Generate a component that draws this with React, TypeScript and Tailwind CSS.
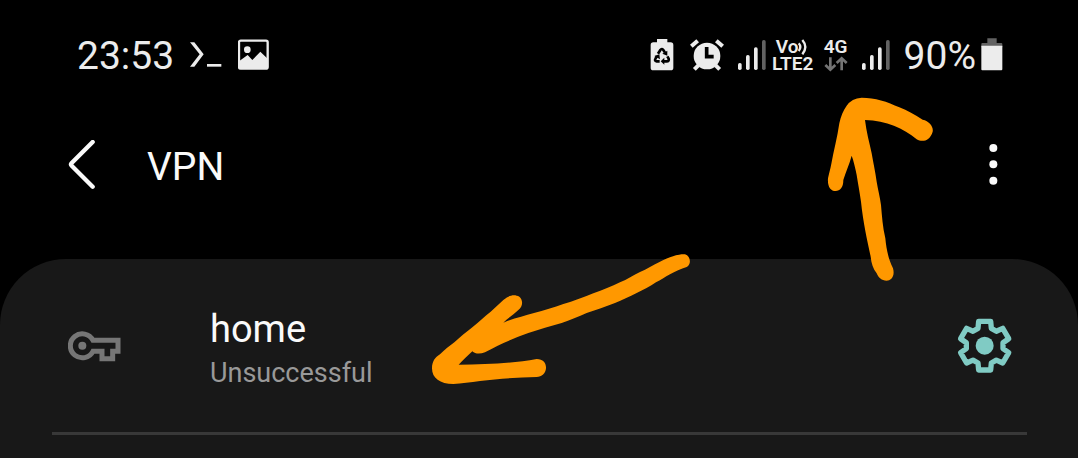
import React from "react";

function PromptIcon() {
  return (
    <svg className="h-8 w-8 shrink-0" viewBox="0 0 96 96" fill="#ececec" aria-hidden="true">
      <path d="M0 10H13L41 46L13 83H0L29 46Z" />
      <rect x="51" y="75" width="43" height="8" />
    </svg>
  );
}

function ImageIcon() {
  return (
    <svg className="h-8 w-8 shrink-0" viewBox="0 0 96 96" aria-hidden="true">
      <rect x="3" y="5" width="86" height="84" rx="5" fill="none" stroke="#ececec" strokeWidth="7" />
      <circle cx="28" cy="32" r="10" fill="#ececec" />
      <path d="M3 67L29 48L43 63L67 38L89 59V89H3Z" fill="#ececec" />
    </svg>
  );
}

function RecycleBatteryIcon() {
  return (
    <svg className="h-8 w-6 shrink-0" viewBox="0 0 72 96" aria-hidden="true">
      <path d="M21 0H52V10H62Q70 10 70 18V86Q70 94 62 94H10Q2 94 2 86V18Q2 10 10 10H21Z" fill="#ececec" />
      <g fill="none" stroke="#000" strokeWidth="8">
        <path d="M24 44L31 33Q35 27 40 33L45 41" />
        <path d="M52 52L56 59Q58 67 50 67H42" />
        <path d="M29 67H20Q12 66 17 58L21 52" />
      </g>
      <g fill="#000">
        <path d="M52 35V50L37 44Z" />
        <path d="M43 56V77L32 67Z" />
        <path d="M13 51L28 46L30 61Z" />
      </g>
    </svg>
  );
}

function AlarmIcon() {
  return (
    <svg className="h-8 w-[34px] shrink-0" viewBox="0 0 102 96" aria-hidden="true">
      <circle cx="51" cy="51" r="40" fill="#ececec" />
      <path
        d="M4 22L23 5M79 5L98 22M25 79L13 91M77 79L89 91"
        fill="none"
        stroke="#ececec"
        strokeWidth="12"
      />
      <path d="M50 24V53H71" fill="none" stroke="#000" strokeWidth="11" />
    </svg>
  );
}

function SignalIcon() {
  return (
    <svg className="h-8 w-7 shrink-0" viewBox="0 0 84 96" aria-hidden="true">
      <g fill="#ececec">
        <rect x="0" y="72" width="11" height="21" rx="5" />
        <rect x="24" y="48" width="11" height="45" rx="5" />
        <rect x="48" y="25" width="11" height="68" rx="5" />
      </g>
      <rect x="72" y="3" width="11" height="90" rx="5" fill="#626262" />
    </svg>
  );
}

function BatteryIcon() {
  return (
    <svg className="h-[34px] w-[22px] shrink-0" viewBox="0 0 66 102" aria-hidden="true">
      <path d="M19 1H47V15H61Q64 15 64 18V28H1V18Q1 15 4 15H19Z" fill="#626262" />
      <path d="M1 23H64V94Q64 97 61 97H4Q1 97 1 94Z" fill="#ececec" />
    </svg>
  );
}

function StatusBar() {
  return (
    <div className="flex h-[110px] items-center justify-between pl-[77px] pr-[75px] text-[39px] leading-none text-[#ececec]">
      <div className="flex items-center">
        <time className="pt-0.5">23:53</time>
        <div className="ml-4 flex gap-4">
          <PromptIcon />
          <ImageIcon />
        </div>
      </div>
      <div className="flex items-center">
        <RecycleBatteryIcon />
        <span className="ml-4 flex">
          <AlarmIcon />
        </span>
        <span className="ml-[14px] flex">
          <SignalIcon />
        </span>
        <div className="ml-[6px] flex w-[42px] flex-col items-center text-[19px] font-semibold leading-[17px]">
          <span className="flex items-center">
            Vo
            <svg className="h-4 w-[11px]" viewBox="0 0 33 48" fill="none" stroke="#ececec" strokeWidth="7" aria-hidden="true">
              <path d="M2 13Q12 24 2 36M13 3Q31 24 13 46" />
            </svg>
          </span>
          <span>LTE2</span>
        </div>
        <div className="ml-[10px] flex w-6 flex-col items-center text-[19px] font-semibold leading-[17px]">
          <span>4G</span>
          <svg className="h-[17px] w-6" viewBox="0 0 72 51" fill="none" stroke="#747474" strokeWidth="8" aria-hidden="true">
            <path d="M19 7V43M4 30L19 44L34 30M53 46V11M38 24L53 10L68 24" />
          </svg>
        </div>
        <span className="ml-[14px] flex">
          <SignalIcon />
        </span>
        <span className="ml-[14px] pt-0.5">90%</span>
        <span className="ml-[5px] flex">
          <BatteryIcon />
        </span>
      </div>
    </div>
  );
}

function Header() {
  return (
    <header className="flex h-[110px] items-center justify-between pl-[68px] pr-[78px]">
      <div className="flex items-center gap-[51px]">
        <button type="button" aria-label="Back">
          <svg className="h-[50px] w-7" viewBox="0 0 84 150" fill="none" stroke="#fafafa" strokeWidth="13" strokeLinecap="round" strokeLinejoin="round">
            <path d="M74 6L11 69Q7 73 11 77L74 140" />
          </svg>
        </button>
        <h1 className="pt-[3px] text-[39px] leading-[44px] text-[#fafafa]">VPN</h1>
      </div>
      <button type="button" aria-label="More options">
        <svg className="h-11 w-3.5" viewBox="0 0 42 132" fill="#fafafa">
          <circle cx="22" cy="15" r="12" />
          <circle cx="22" cy="64" r="12" />
          <circle cx="22" cy="113" r="12" />
        </svg>
      </button>
    </header>
  );
}

function KeyIcon() {
  return (
    <svg className="h-8 w-[54px] shrink-0" viewBox="0 0 162 96" aria-hidden="true">
      <path
        d="M75 31H150V64H134V86H102V64H75A36 36 0 1 1 75 31Z"
        fill="none"
        stroke="#767676"
        strokeWidth="15"
      />
      <circle cx="43" cy="47" r="12" fill="#767676" />
    </svg>
  );
}

const TOOTH: [number, number][] = [
  [-20, -52],
  [-18, -73],
  [18, -73],
  [20, -52],
];

const gearPoints = [0, 60, 120, 180, 240, 300]
  .flatMap((deg) => {
    const a = (deg * Math.PI) / 180;
    return TOOTH.map(
      ([x, y]) =>
        `${(83 + x * Math.cos(a) - y * Math.sin(a)).toFixed(1)},${(83 + x * Math.sin(a) + y * Math.cos(a)).toFixed(1)}`,
    );
  })
  .join(" ");

function GearIcon() {
  return (
    <svg className="h-14 w-14" viewBox="0 0 168 168" aria-hidden="true">
      <polygon points={gearPoints} fill="none" stroke="#80cbc4" strokeWidth="16" strokeLinejoin="round" />
      <circle cx="83" cy="83" r="27" fill="#80cbc4" />
    </svg>
  );
}

function VpnRow() {
  return (
    <li>
      <div className="flex h-[173px] items-center pl-[68px] pr-[65px]">
        <KeyIcon />
        <div className="ml-[88px] flex-1 pt-2.5 leading-[44px]">
          <div className="text-[38px] text-[#fafafa]">home</div>
          <div className="text-[27px] text-[#999999]">Unsuccessful</div>
        </div>
        <button type="button" aria-label="Settings for home">
          <GearIcon />
        </button>
      </div>
      <div className="ml-[52px] mr-[51px] h-[3px] bg-[#383838]" />
    </li>
  );
}

function StatusArrow() {
  return (
    <svg className="pointer-events-none absolute left-[420px] top-60 h-[160px] w-[290px]" viewBox="0 0 870 480" fill="#ff9800" aria-hidden="true">
      <path d="M36 385C36 365 45 352 60 343C75 328 90 316 104 306C118 292 140 276 158 261C176 247 195 228 212 215L250 180C270 163 285 163 298 170C310 180 309 200 295 210C280 225 262 235 250 248C280 235 312 228 342 219C372 211 402 203 430 192C460 184 490 172 520 160C548 150 575 139 600 127C622 118 640 106 660 96C680 87 700 74 720 65C750 50 775 42 795 43C812 48 815 72 800 81C783 87 765 94 750 103C735 111 722 120 708 127C690 139 670 150 650 159C628 170 606 181 585 189C557 200 528 210 500 219C475 230 450 241 425 249C392 258 358 268 325 279C280 295 235 315 195 337C180 343 165 342 157 334C145 345 130 360 116 374C200 374 280 370 350 357C370 357 379 370 378 385C377 400 365 411 350 411C260 412 170 425 100 432C60 432 36 415 36 385Z" />
    </svg>
  );
}

function NetworkArrow() {
  return (
    <svg className="pointer-events-none absolute right-12 top-[85px] h-[210px] w-[220px]" viewBox="0 0 660 630" fill="#ff9800" aria-hidden="true">
      <path d="M110 62Q125 40 155 38C195 38 232 50 268 67C292 76 314 90 338 104C358 108 371 125 368 140C360 167 338 173 320 163C280 130 230 107 165 105C169 140 178 172 185 205C190 234 196 262 200 290C204 314 210 336 213 360C216 394 218 427 226 460C229 492 235 522 249 550C256 575 242 587 230 587C215 587 205 578 200 565C189 550 184 535 182 515C177 490 171 465 166 438C161 410 156 380 153 350C149 322 144 296 140 270C136 250 131 228 125 212C118 238 107 262 100 285C100 308 90 318 77 318C62 318 52 305 54 280C58 262 61 252 64 236C71 198 82 158 88 115C92 95 100 75 110 62Z" />
    </svg>
  );
}

export default function App() {
  return (
    <div className="relative flex min-h-screen flex-col bg-black font-['Roboto',sans-serif]">
      <StatusBar />
      <Header />
      <main className="mt-[39px] flex-1 rounded-t-[66px] bg-[#181818]">
        <ul>
          <VpnRow />
        </ul>
      </main>
      <StatusArrow />
      <NetworkArrow />
    </div>
  );
}
